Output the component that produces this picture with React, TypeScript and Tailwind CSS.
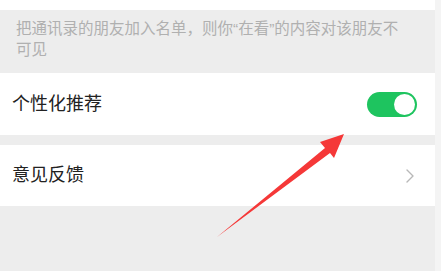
import React from 'react';

const font = { fontFamily: '"Liberation Sans", "Noto Sans CJK SC", sans-serif' };

function Toggle() {
  return (
    <div className="w-[50px] h-[25px] rounded-full bg-[#1ec45f] flex items-center justify-end pr-[2px]">
      <div className="w-[21px] h-[21px] rounded-full bg-white" />
    </div>
  );
}

function Chevron() {
  return (
    <svg width="8" height="14" viewBox="0 0 8 14" fill="none">
      <path d="M1 1l6 6-6 6" stroke="#b8b8b8" strokeWidth="1.4" strokeLinecap="round" strokeLinejoin="round" />
    </svg>
  );
}

export default function App() {
  return (
    <div className="relative w-[441px] h-[271px] flex bg-[#ededed] overflow-hidden" style={font}>
      <div className="w-[435px] flex flex-col">
        <div className="h-[10px] bg-white" />
        <div className="h-[63px] pl-[16px] pt-[8px]">
          <p className="w-[392px] text-[15.5px] leading-[21px] text-[#b0b0b0]">
            把通讯录的朋友加入名单，则你“在看”的内容对该朋友不可见
          </p>
        </div>
        <div className="h-[62px] bg-white flex items-center justify-between pl-[12px] pr-[18px]">
          <span className="text-[18px] text-[#222]">个性化推荐</span>
          <Toggle />
        </div>
        <div className="h-[10px]" />
        <div className="h-[61px] bg-white flex items-center justify-between pl-[12px] pr-[21px]">
          <span className="text-[18px] text-[#222]">意见反馈</span>
          <Chevron />
        </div>
      </div>
      <div className="w-[6px] bg-[#f4f4f4]" />
      <svg className="absolute inset-0 pointer-events-none" width="441" height="271" viewBox="0 0 441 271">
        <polygon
          points="344,134 320,142 325,148 217,237 330,153 334,158"
          fill="#f53838"
        />
      </svg>
    </div>
  );
}
